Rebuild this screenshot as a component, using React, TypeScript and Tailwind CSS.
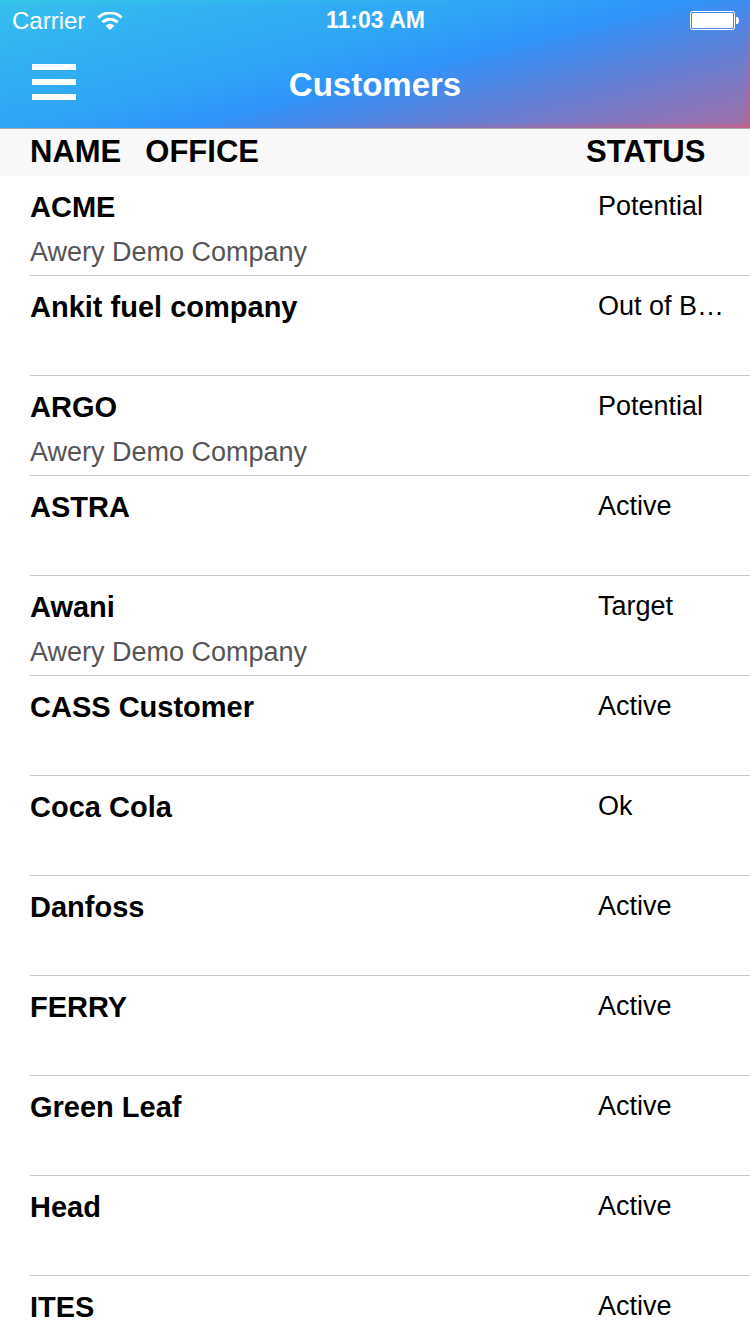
/**
 * Customers list screen
 * Status bar, navigation bar and the name / office / status table.
 */
type Customer = {
  name: string;
  office?: string;
  status: string;
};

const OFFICE = 'Awery Demo Company';

const CUSTOMERS: Customer[] = [
  { name: 'ACME', office: OFFICE, status: 'Potential' },
  { name: 'Ankit fuel company', status: 'Out of B…' },
  { name: 'ARGO', office: OFFICE, status: 'Potential' },
  { name: 'ASTRA', status: 'Active' },
  { name: 'Awani', office: OFFICE, status: 'Target' },
  { name: 'CASS Customer', status: 'Active' },
  { name: 'Coca Cola', status: 'Ok' },
  { name: 'Danfoss', status: 'Active' },
  { name: 'FERRY', status: 'Active' },
  { name: 'Green Leaf', status: 'Active' },
  { name: 'Head', status: 'Active' },
  { name: 'ITES', status: 'Active' },
];

// soft coloured edges (top, bottom, right) over the diagonal gradient
const HEADER_BG =
  '[background:linear-gradient(90deg,#34d3de60,#34d3de00_70%)_top/100%_3px_no-repeat,linear-gradient(90deg,#e0567000_35%,#e0567066)_bottom/100%_4px_no-repeat,linear-gradient(180deg,#e0567000,#e0567066)_right/4px_100%_no-repeat,linear-gradient(166deg,#35c0ec_0%,#32b1f3_20%,#30a4f6_42%,#2f94fa_54%,#4b87e6_65%,#6b7dcf_78%,#a36fa6_100%)]';

function WifiIcon() {
  return (
    <svg width="26" height="18" viewBox="0 0 26 18" fill="none" aria-hidden="true">
      <path d="M1.4 5.6a16.6 16.6 0 0 1 23.2 0" stroke="white" strokeWidth="3" />
      <path d="M5.3 10.3a11 11 0 0 1 15.4 0" stroke="white" strokeWidth="3" />
      <path d="M13 18l-4.6-4.2a6.3 6.3 0 0 1 9.2 0z" fill="white" />
    </svg>
  );
}

function BatteryIcon() {
  return (
    <svg width="49" height="19" viewBox="0 0 49 19" fill="none" aria-hidden="true">
      <rect x="0.5" y="0.5" width="44" height="18" rx="2" stroke="white" />
      <rect x="2" y="2" width="41" height="15" rx="1" fill="white" />
      <path d="M46 6h1.5q1.5 1 1.5 3.5t-1.5 3.5H46z" fill="white" />
    </svg>
  );
}

function StatusBar() {
  return (
    <div className="grid h-10 grid-cols-3 items-center pt-px pr-[11px] pl-3">
      <div className="flex items-center gap-3 text-2xl">
        <span>Carrier</span>
        <WifiIcon />
      </div>
      <time className="text-center text-[23px] font-bold">11:03 AM</time>
      <div className="flex justify-end">
        <BatteryIcon />
      </div>
    </div>
  );
}

function NavBar() {
  return (
    <div className="grid h-22 grid-cols-[1fr_auto_1fr] items-center px-8">
      <button type="button" aria-label="Menu" className="flex w-11 flex-col gap-[9px] pb-1">
        <span className="h-1.5 w-full bg-white" />
        <span className="h-1.5 w-full bg-white" />
        <span className="h-1.5 w-full bg-white" />
      </button>
      <h1 className="pt-0.5 text-[33px] font-bold">Customers</h1>
    </div>
  );
}

function CustomerRow({ name, office, status }: Customer) {
  return (
    <tr>
      <td className="p-0 pl-[30px]">
        <div className="h-[100px] border-b border-[#c8c7cc] pt-3">
          <p className="text-[29px] leading-[38px] font-bold">{name}</p>
          {office && <p className="mt-2.5 text-[27px] leading-8 text-[#555]">{office}</p>}
        </div>
      </td>
      <td className="p-0">
        <div className="h-[100px] border-b border-[#c8c7cc] pt-3 pr-5 pl-3">
          <p className="truncate text-[27px] leading-9">{status}</p>
        </div>
      </td>
    </tr>
  );
}

export default function App() {
  return (
    <div className="flex h-screen flex-col overflow-hidden bg-white font-['Liberation_Sans',Arial,sans-serif] text-black">
      <header className={`shrink-0 text-white ${HEADER_BG}`}>
        <StatusBar />
        <NavBar />
      </header>
      <main className="min-h-0 flex-1 overflow-y-auto [scrollbar-width:none]">
        <table className="w-full table-fixed border-separate border-spacing-0 text-left">
          <thead className="bg-[#f8f8f8] text-[31px]">
            <tr>
              <th className="h-12 border-t border-[#a9a9ad] p-0 pb-0.5 pl-[30px] leading-9 font-bold">
                <span>NAME</span>
                <span className="ml-6">OFFICE</span>
              </th>
              <th className="h-12 w-[164px] border-t border-[#a9a9ad] p-0 pb-0.5 leading-9 font-bold">STATUS</th>
            </tr>
          </thead>
          <tbody>
            {CUSTOMERS.map((c) => (
              <CustomerRow key={c.name} {...c} />
            ))}
          </tbody>
        </table>
      </main>
    </div>
  );
}
